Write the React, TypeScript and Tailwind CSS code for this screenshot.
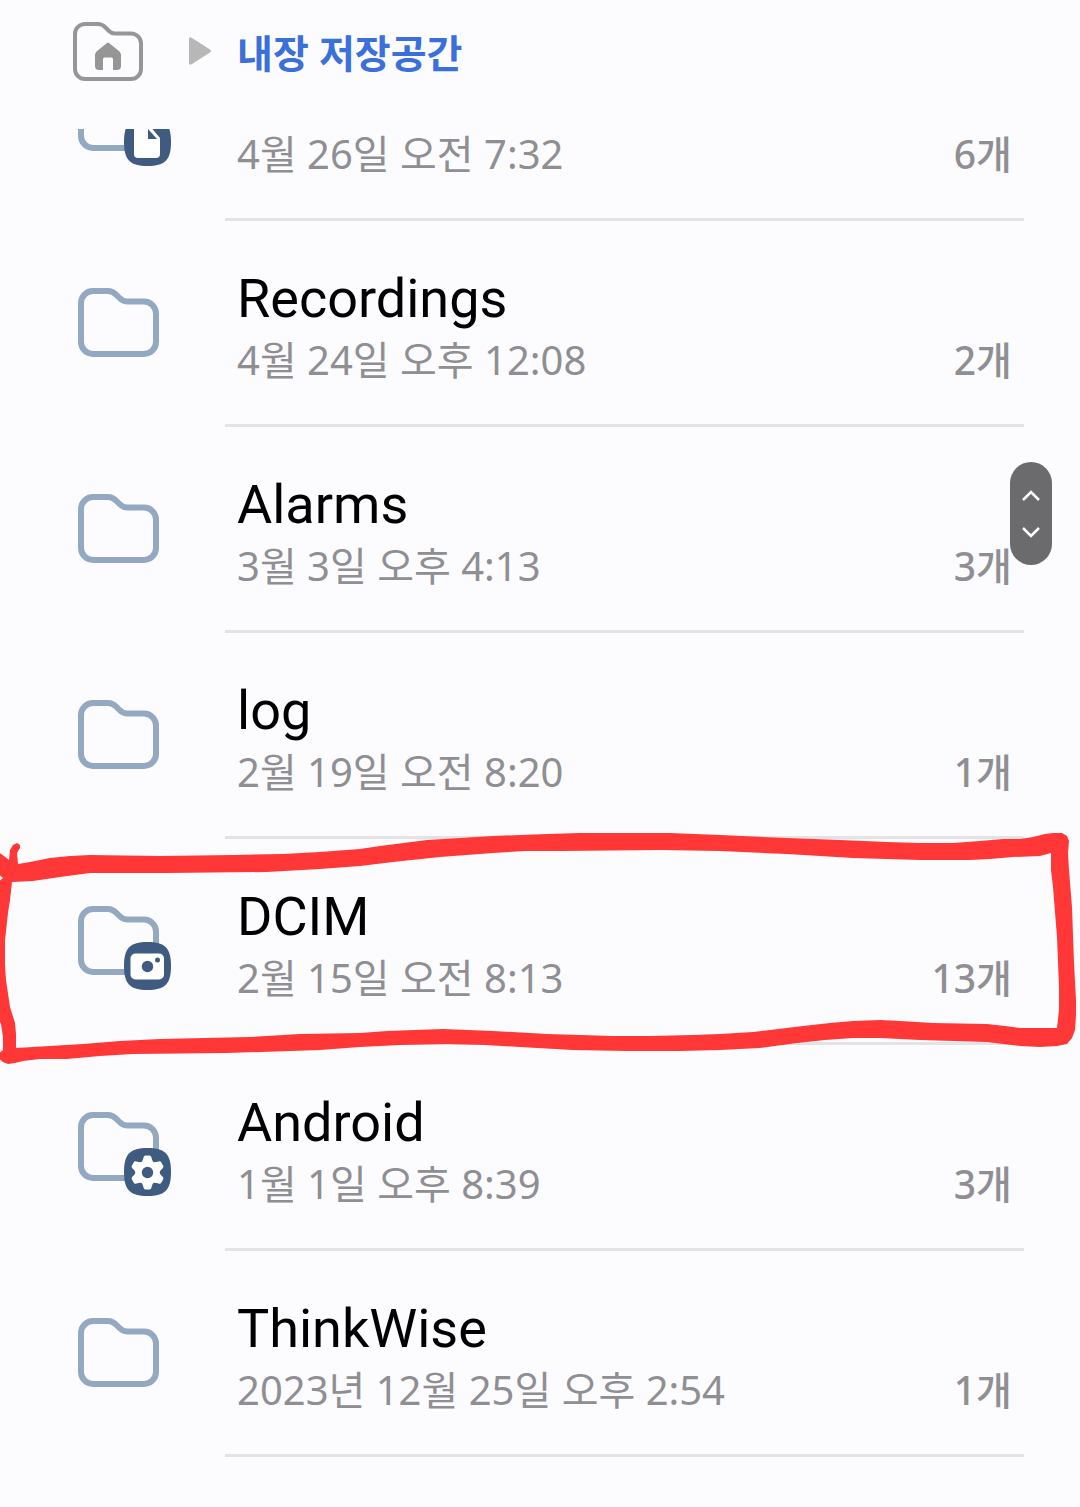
import React, { useState } from "react";

type FolderKind = "plain" | "document" | "camera" | "settings";

type FolderItem = {
  id: number;
  name?: string;
  date: string;
  count: number;
  kind: FolderKind;
};

const folders: FolderItem[] = [
  { id: 1, date: "4월 26일 오전 7:32", count: 6, kind: "document" },
  {
    id: 2,
    name: "Recordings",
    date: "4월 24일 오후 12:08",
    count: 2,
    kind: "plain",
  },
  { id: 3, name: "Alarms", date: "3월 3일 오후 4:13", count: 3, kind: "plain" },
  { id: 4, name: "log", date: "2월 19일 오전 8:20", count: 1, kind: "plain" },
  { id: 5, name: "DCIM", date: "2월 15일 오전 8:13", count: 13, kind: "camera" },
  {
    id: 6,
    name: "Android",
    date: "1월 1일 오후 8:39",
    count: 3,
    kind: "settings",
  },
  {
    id: 7,
    name: "ThinkWise",
    date: "2023년 12월 25일 오후 2:54",
    count: 1,
    kind: "plain",
  },
];

const HomeFolderIcon = () => (
  <svg width="72" height="60" viewBox="0 0 72 60" fill="none">
    <path
      d="M13 2H26C29 2 31 3 33 5L37 9C39 11 40 11.500 43 11.500H59A10 10 0 0 1 69 21.500V47A10 10 0 0 1 59 57H13A10 10 0 0 1 3 47V12A10 10 0 0 1 13 2Z"
      stroke="#969696"
      strokeWidth="4"
    />
    <path
      d="M35 21Q36 20 37 21L47.500 29.500Q49 31 49 33V44Q49 48 45 48H41V37Q41 35.500 39.500 35.500H32.500Q31 35.500 31 37V48H27Q23 48 23 44V33Q23 31 24.500 29.500Z"
      fill="#969696"
    />
  </svg>
);

const Badge = ({ kind }: { kind: FolderKind }) => {
  if (kind === "plain") return null;
  return (
    <>
      <path
        d="M70.500 37C88 37 94 43 94 61S88 85 70.500 85S47 79 47 61S53 37 70.500 37Z"
        fill="#3f5b80"
      />
      {kind === "document" && (
        <>
          <path
            d="M61 44H72L83 57V73Q83 77 79 77H61Q57 77 57 73V48Q57 44 61 44Z"
            fill="#fff"
          />
          <path d="M71 48V58H80Z" fill="#3f5b80" />
        </>
      )}
      {kind === "camera" && (
        <>
          <rect x="53.500" y="48.500" width="33.500" height="26" rx="5" fill="#fff" />
          <circle cx="70.500" cy="61.500" r="5.700" fill="#3f5b80" />
          <circle cx="80.500" cy="55" r="2.500" fill="#3f5b80" />
        </>
      )}
      {kind === "settings" && (
        <g transform="translate(70.500 61.500)">
          <circle r="12" fill="#fff" />
          {[0, 60, 120, 180, 240, 300].map((angle) => (
            <path
              key={angle}
              transform={`rotate(${angle})`}
              d="M-7 -9C-5 -11 -4.500 -13 -4 -15Q-3.500 -17 -2 -17H2Q3.500 -17 4 -15C4.500 -13 5 -11 7 -9Z"
              fill="#fff"
            />
          ))}
          <circle r="5.700" fill="#3f5b80" />
        </g>
      )}
    </>
  );
};

const FolderIcon = ({ kind }: { kind: FolderKind }) => (
  <svg
    width="96"
    height="88"
    viewBox="0 0 96 88"
    fill="none"
    className="mt-[66px] shrink-0"
  >
    <path
      d="M16 4H31C35 4 37 5.500 39.500 8L42 10.500C44.500 13 46 14.500 50 14.500H67A12 12 0 0 1 79 26.500V55A12 12 0 0 1 67 67H16A12 12 0 0 1 4 55V16A12 12 0 0 1 16 4Z"
      stroke="#93a8c1"
      strokeWidth="6"
    />
    <Badge kind={kind} />
  </svg>
);

// hand drawn marker around a row
const MarkerOutline = () => (
  <svg
    className="absolute left-0 -top-3 w-full h-[240px] pointer-events-none"
    viewBox="0 827 1080 240"
    preserveAspectRatio="none"
    fill="#ff3737"
    fillRule="evenodd"
  >
    <path
      d="M-2 852L4 856L9 860L10 850L13 845L17 843L20 845L20 848L17 853L18 864L30 862L50 858L70 856L90 855L160 856L233 855L283 854L320 852L360 849L380 846L427 840L460 838L493 836L547 834L580 833L627 833L670 833L720 835L787 838L840 840L887 842L920 843L953 843L980 841L1003 839L1020 839L1033 837L1045 834L1053 833L1062 833L1067 836L1069 841L1068 853L1069 870L1072 907L1073 935L1074 963L1076 1000L1076 1015L1075 1030L1072 1038L1067 1044L1057 1046L1040 1047L1020 1046L1003 1044L987 1042L920 1040L880 1038L853 1038L825 1040L797 1043L760 1048L720 1050L680 1051L627 1051L573 1050L520 1047L485 1045L447 1044L400 1045L360 1047L320 1050L227 1053L133 1054L100 1056L67 1059L40 1059L23 1061L15 1063L8 1064L3 1062L-2 1058L-2 1054L3 1050L3 1037L1 1024L-2 1018V882L3 878L-2 874ZM12 882L10 900L8 913L5 940L5 965L6 980L10 1007L15 1023L16 1034L16 1048L33 1047L83 1044L120 1041L160 1039L250 1037L300 1034L360 1033L387 1031L443 1029L493 1031L547 1034L613 1036L650 1036L693 1035L720 1034L753 1032L803 1026L830 1023L853 1021L880 1020L900 1021L933 1023L987 1024L1005 1026L1020 1028L1057 1028L1059 1010L1059 987L1057 937L1053 887L1051 870L1051 853L1040 856L1013 857L990 859L970 860L920 860L853 858L787 854L720 851L660 850L560 851L525 851L493 853L440 857L393 862L360 866L320 869L267 872L167 873L90 873L75 875L60 877L33 881Z"
    />
  </svg>
);

const App = () => {
  const [marked, setMarked] = useState(5);

  return (
    <main className="relative min-h-screen w-full overflow-hidden bg-[#fcfcff] font-['Noto_Sans','Noto_Sans_CJK_KR',sans-serif]">
      <nav className="flex h-[129px] items-start pl-[72px] pt-[22px]">
        <button aria-label="홈">
          <HomeFolderIcon />
        </button>
        <svg
          width="24"
          height="30"
          viewBox="0 0 24 30"
          className="ml-11 mr-[25px] mt-[14px]"
        >
          <path
            d="M1 3Q1 0 4 2L22 13.500Q24 15 22 16.500L4 28Q1 30 1 27Z"
            fill="#b7b7b7"
          />
        </svg>
        <button className="text-[39px] leading-[62px] font-bold text-[#3b6fd9]">
          내장 저장공간
        </button>
      </nav>

      <div className="overflow-hidden">
        {/* list is scrolled part way into the first row */}
        <ul className="-mt-[114px]">
          {folders.map((folder) => (
            <li key={folder.id} className="relative">
              <button
                className="flex w-full items-start gap-[52px] pl-[77px] pr-14 text-left"
                onClick={() => setMarked(folder.id)}
              >
                <FolderIcon kind={folder.kind} />
                <div className="flex flex-1 items-end justify-between border-b-3 border-[#e3e3e6] px-3 pt-[42px] pb-[42px]">
                  <div>
                    <p className="mb-[3px] min-h-[72px] font-[Roboto,sans-serif] text-[54px] leading-[72px] text-black">
                      {folder.name}
                    </p>
                    <p className="text-[40px] leading-[44px] text-[#8f8f93]">
                      {folder.date}
                    </p>
                  </div>
                  <p className="text-[39px] leading-[44px] font-medium text-[#8f8f93]">
                    {folder.count}개
                  </p>
                </div>
              </button>
              {marked === folder.id && <MarkerOutline />}
            </li>
          ))}
        </ul>
      </div>

      <button
        aria-label="스크롤"
        className="absolute right-7 top-[462px] flex h-[103px] w-[42px] flex-col items-center justify-center rounded-full bg-[#6b6b6d]"
      >
        <svg
          width="20"
          height="48"
          viewBox="0 0 20 48"
          fill="none"
          stroke="#fff"
          strokeWidth="2.500"
        >
          <path d="M2 10L10 2L18 10M2 38L10 46L18 38" />
        </svg>
      </button>
    </main>
  );
};

export default App;
